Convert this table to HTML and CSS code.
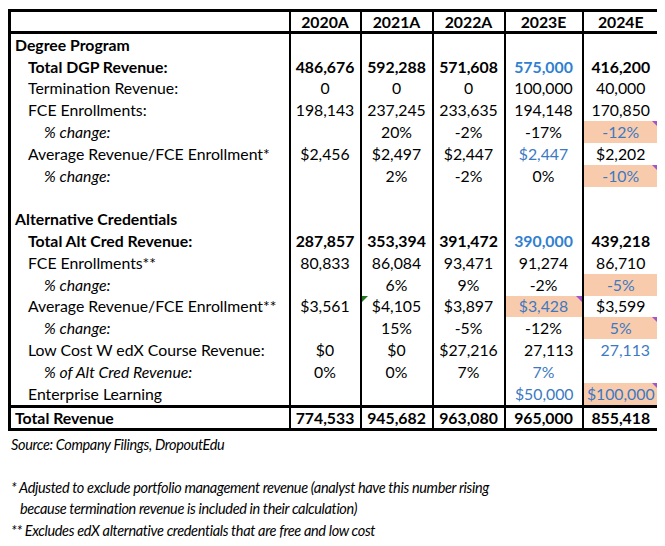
FILE: index.html
```html
<!DOCTYPE html>
<html>
<head>
<meta charset="utf-8">
<link rel="stylesheet" href="styles.css">
</head>
<body>
<table class="fin">
  <colgroup>
    <col class="c-label"><col class="c-a"><col class="c-b"><col class="c-b"><col class="c-e"><col class="c-f">
  </colgroup>
  <thead>
    <tr class="head"><th></th><th>2020A</th><th>2021A</th><th>2022A</th><th>2023E</th><th>2024E</th></tr>
  </thead>
  <tbody>
    <tr><td class="l0 b">Degree Program</td><td></td><td></td><td></td><td></td><td></td></tr>
    <tr class="b"><td class="l1">Total DGP Revenue:</td><td>486,676</td><td>592,288</td><td>571,608</td><td class="blue-b">575,000</td><td>416,200</td></tr>
    <tr><td class="l1">Termination Revenue:</td><td>0</td><td>0</td><td>0</td><td>100,000</td><td>40,000</td></tr>
    <tr><td class="l1">FCE Enrollments:</td><td>198,143</td><td>237,245</td><td>233,635</td><td>194,148</td><td>170,850</td></tr>
    <tr><td class="l2 i">% change:</td><td></td><td>20%</td><td>-2%</td><td>-17%</td><td class="hl blue note">-12%</td></tr>
    <tr><td class="l1">Average Revenue/FCE Enrollment*</td><td>$2,456</td><td>$2,497</td><td>$2,447</td><td class="blue">$2,447</td><td>$2,202</td></tr>
    <tr><td class="l2 i">% change:</td><td></td><td>2%</td><td>-2%</td><td>0%</td><td class="hl blue note">-10%</td></tr>
    <tr><td class="l0"></td><td></td><td></td><td></td><td></td><td></td></tr>
    <tr><td class="l0 b">Alternative Credentials</td><td></td><td></td><td></td><td></td><td></td></tr>
    <tr class="b"><td class="l1">Total Alt Cred Revenue:</td><td>287,857</td><td>353,394</td><td>391,472</td><td class="blue-b">390,000</td><td>439,218</td></tr>
    <tr><td class="l1">FCE Enrollments**</td><td>80,833</td><td>86,084</td><td>93,471</td><td>91,274</td><td>86,710</td></tr>
    <tr><td class="l2 i">% change:</td><td></td><td>6%</td><td>9%</td><td>-2%</td><td class="hl blue">-5%</td></tr>
    <tr><td class="l1">Average Revenue/FCE Enrollment**</td><td>$3,561</td><td class="err">$4,105</td><td>$3,897</td><td class="hl blue note">$3,428</td><td>$3,599</td></tr>
    <tr><td class="l2 i">% change:</td><td></td><td>15%</td><td>-5%</td><td>-12%</td><td class="hl blue note">5%</td></tr>
    <tr><td class="l1">Low Cost W edX Course Revenue:</td><td>$0</td><td>$0</td><td>$27,216</td><td class="r">27,113</td><td class="r blue">27,113</td></tr>
    <tr><td class="l2 i">% of Alt Cred Revenue:</td><td>0%</td><td>0%</td><td>7%</td><td class="blue">7%</td><td></td></tr>
    <tr><td class="l1">Enterprise Learning</td><td></td><td></td><td></td><td class="r blue">$50,000</td><td class="hl blue note">$100,000</td></tr>
  </tbody>
  <tfoot>
    <tr class="total b"><td class="l0">Total Revenue</td><td>774,533</td><td>945,682</td><td>963,080</td><td>965,000</td><td>855,418</td></tr>
  </tfoot>
</table>
<div class="notes">
  <p>Source: Company Filings, DropoutEdu</p>
  <p class="gap"></p>
  <p>* Adjusted to exclude portfolio management revenue (analyst have this number rising</p>
  <p class="indent">because termination revenue is included in their calculation)</p>
  <p>** Excludes edX alternative credentials that are free and low cost</p>
</div>
</body>
</html>
```

FILE: styles.css
```css
html, body {
  background: #ffffff;
}
body {
  margin: 9px 8px 0 8px;
  font-family: Lato, "Open Sans", sans-serif;
  font-size: 15.8px;
  color: #000000;
}
.fin {
  border-collapse: collapse;
  table-layout: fixed;
  width: 650px;
  border: 3px solid #000;
}
.c-label { width: 280px; }
.c-a { width: 71px; }
.c-b { width: 72px; }
.c-e { width: 78px; }
.c-f { width: 77px; }

.fin th, .fin td {
  padding: 0;
  height: 21.8px;
  line-height: 20px;
  text-align: center;
  white-space: nowrap;
  border-left: 2px solid #000;
  border-right: 2px solid #000;
  position: relative;
}
.fin thead th {
  height: 19px;
  line-height: 19px;
  font-weight: 700;
  border-bottom: 3px solid #000;
}
.fin td.l0 { text-align: left; padding-left: 4px; }
.fin td.l1 { text-align: left; padding-left: 17px; }
.fin td.l2 { text-align: left; padding-left: 33px; }
.b, .b td { font-weight: 700; }
.fin .i { font-style: italic; }
.fin .r { text-align: right; padding-right: 8px; }
.fin .blue { color: #3b79c2; }
.fin .blue-b { color: #2f80d0; }
.fin .hl { background: #f8cbad; }
.fin .note::after {
  content: "";
  position: absolute;
  top: 0;
  right: 0;
  border-top: 6px solid #a553c9;
  border-left: 6px solid transparent;
}
.fin .err::before {
  content: "";
  position: absolute;
  top: 0;
  left: 0;
  border-top: 6px solid #1f7a1f;
  border-right: 6px solid transparent;
}
.fin tfoot td {
  height: 20px;
  border-top: 3px solid #000;
  border-bottom: 3px solid #000;
}
.notes {
  margin-top: 3px;
  padding-left: 3px;
  font-style: italic;
  font-size: 14.5px;
  letter-spacing: -0.35px;
  line-height: 21.5px;
}
.notes p {
  margin: 0;
  height: 21.5px;
}
.notes .indent { padding-left: 9px; }
```
